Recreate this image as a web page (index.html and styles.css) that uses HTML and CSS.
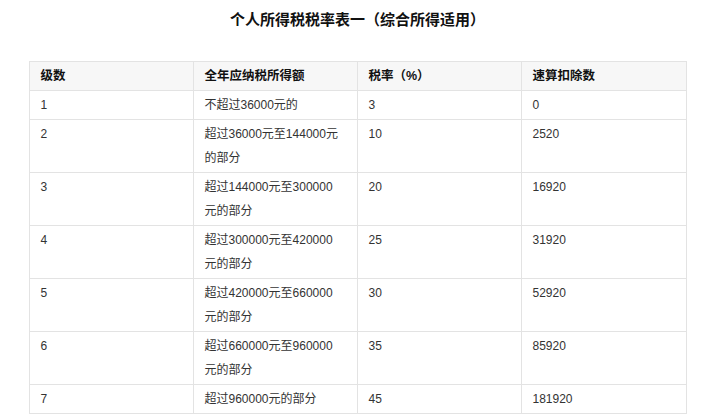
FILE: index.html
```html
<!DOCTYPE html>
<html lang="zh-CN">
<head>
<meta charset="utf-8">
<title>个人所得税税率表一</title>
<link rel="stylesheet" href="styles.css">
</head>
<body>
<h1 class="title">个人所得税税率表一（综合所得适用）</h1>
<table class="tax-table">
  <colgroup>
    <col class="c1"><col class="c2"><col class="c3"><col class="c4">
  </colgroup>
  <thead>
    <tr><th>级数</th><th>全年应纳税所得额</th><th>税率（%）</th><th>速算扣除数</th></tr>
  </thead>
  <tbody>
    <tr><td>1</td><td>不超过36000元的</td><td>3</td><td>0</td></tr>
    <tr><td>2</td><td>超过36000元至144000元的部分</td><td>10</td><td>2520</td></tr>
    <tr><td>3</td><td>超过144000元至300000元的部分</td><td>20</td><td>16920</td></tr>
    <tr><td>4</td><td>超过300000元至420000元的部分</td><td>25</td><td>31920</td></tr>
    <tr><td>5</td><td>超过420000元至660000元的部分</td><td>30</td><td>52920</td></tr>
    <tr><td>6</td><td>超过660000元至960000元的部分</td><td>35</td><td>85920</td></tr>
    <tr><td>7</td><td>超过960000元的部分</td><td>45</td><td>181920</td></tr>
  </tbody>
</table>
</body>
</html>
```
FILE: styles.css
```css
html, body {
  margin: 0;
  padding: 0;
  background: #ffffff;
}
body {
  font-family: "Liberation Sans", "Noto Sans CJK SC", sans-serif;
  color: #333333;
  font-size: 12px;
}
.title {
  margin: 11px 0 0;
  font-size: 15px;
  line-height: 18px;
  font-weight: bold;
  text-align: center;
  color: #111111;
}
.tax-table {
  margin: 32px auto 0;
  width: 657px;
  table-layout: fixed;
  border-collapse: collapse;
}
.c1, .c2, .c3 { width: 164px; }
.c4 { width: 165px; }
.tax-table th,
.tax-table td {
  border: 1px solid #e3e3e3;
  padding: 2px 14px 2px 11px;
  line-height: 24px;
  text-align: left;
  vertical-align: top;
  word-break: normal;
}
.tax-table th {
  background: #f7f7f7;
  font-weight: bold;
  font-size: 12.5px;
  color: #111111;
}
.tax-table td {
  color: #333333;
}
```
